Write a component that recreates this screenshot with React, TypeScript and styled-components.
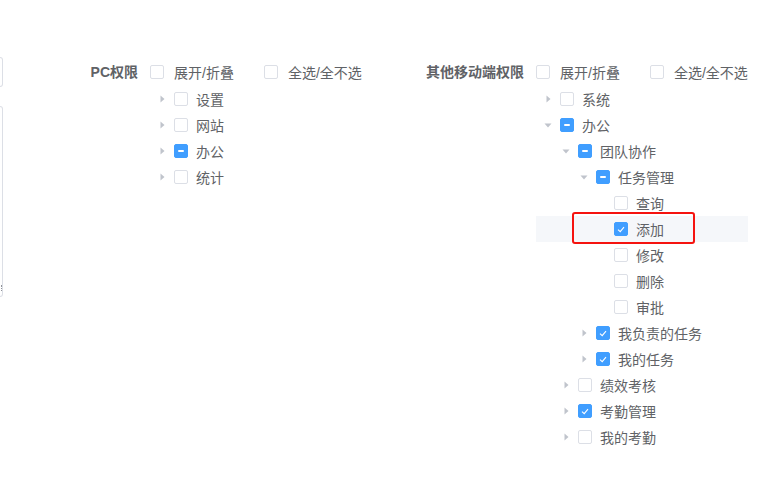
import * as React from "react";
import { styled, createGlobalStyle } from "styled-components";

const GlobalStyle = createGlobalStyle`
	body {
		margin: 0;
		background: #fff;
		font-family: "Liberation Sans", "Noto Sans CJK SC", sans-serif;
		color: #606266;
	}
`;

type CheckState = "none" | "checked" | "half";

type TreeNode = {
	label: string;
	check: CheckState;
	open?: boolean;
	leaf?: boolean;
	active?: boolean;
	children?: TreeNode[];
};

const pcTree: TreeNode[] = [
	{ label: "设置", check: "none" },
	{ label: "网站", check: "none" },
	{ label: "办公", check: "half" },
	{ label: "统计", check: "none" },
];

const mobileTree: TreeNode[] = [
	{ label: "系统", check: "none" },
	{
		label: "办公",
		check: "half",
		open: true,
		children: [
			{
				label: "团队协作",
				check: "half",
				open: true,
				children: [
					{
						label: "任务管理",
						check: "half",
						open: true,
						children: [
							{ label: "查询", check: "none", leaf: true },
							{ label: "添加", check: "checked", leaf: true, active: true },
							{ label: "修改", check: "none", leaf: true },
							{ label: "删除", check: "none", leaf: true },
							{ label: "审批", check: "none", leaf: true },
						],
					},
					{ label: "我负责的任务", check: "checked" },
					{ label: "我的任务", check: "checked" },
				],
			},
			{ label: "绩效考核", check: "none" },
			{ label: "考勤管理", check: "checked" },
			{ label: "我的考勤", check: "none" },
		],
	},
];

const Page = styled.div`
	display: flex;
	align-items: flex-start;
	padding-top: 59px;
`;

const Stub = styled.div`
	width: 3px;
	margin-top: -2px;
	display: flex;
	flex-direction: column;
	gap: 19px;
`;

const StubBox = styled.div<{ $h: number }>`
	height: ${(p) => p.$h}px;
	border: 1px solid #dcdfe6;
	border-left: none;
	border-radius: 0 4px 4px 0;
	box-sizing: border-box;
	position: relative;
`;

const Grip = styled.span`
	position: absolute;
	right: 0;
	bottom: 5px;
	width: 2px;
	height: 6px;
	border-right: 1px dotted #909399;
`;

const Section = styled.div<{ $labelWidth: number; $contentWidth: number }>`
	display: grid;
	grid-template-columns: ${(p) => p.$labelWidth}px ${(p) => p.$contentWidth}px;
`;

const SectionLabel = styled.div`
	height: 26px;
	line-height: 26px;
	text-align: right;
	padding-right: 12px;
	font-size: 14px;
	font-weight: 700;
	color: #606266;
`;

const HeaderRow = styled.div`
	height: 26px;
	margin-bottom: 1px;
	display: flex;
	align-items: center;
	gap: 30px;
`;

const CheckOption = styled.label`
	display: flex;
	align-items: center;
	gap: 10px;
	font-size: 14px;
	color: #606266;
	white-space: nowrap;
`;

const Box = styled.span<{ $state: CheckState }>`
	width: 14px;
	height: 14px;
	box-sizing: border-box;
	border-radius: 2px;
	flex-shrink: 0;
	display: flex;
	align-items: center;
	justify-content: center;
	border: 1px solid ${(p) => (p.$state === "none" ? "#dcdfe6" : "#409eff")};
	background: ${(p) => (p.$state === "none" ? "#fff" : "#409eff")};
`;

const HalfBar = styled.span`
	width: 6px;
	height: 2px;
	background: #fff;
	border-radius: 1px;
`;

const Row = styled.div<{ $level: number; $active?: boolean }>`
	position: relative;
	height: 26px;
	display: flex;
	align-items: center;
	padding-left: ${(p) => p.$level * 18}px;
	background: ${(p) => (p.$active ? "#f5f7fa" : "transparent")};
	font-size: 14px;
	color: #606266;
	white-space: nowrap;
`;

const Caret = styled.span`
	width: 24px;
	height: 24px;
	display: flex;
	align-items: center;
	justify-content: center;
	flex-shrink: 0;
`;

const RowLabel = styled.span`
	margin-left: 8px;
`;

const Marker = styled.span`
	position: absolute;
	left: 36px;
	top: -4px;
	width: 123px;
	height: 32px;
	box-sizing: border-box;
	border: 2px solid #f5130f;
	border-radius: 3px;
`;

function CheckBox({ state }: { state: CheckState }) {
	return (
		<Box $state={state}>
			{state === "checked" && (
				<svg width="8" height="7" viewBox="0 0 8 7">
					<path d="M1 3.6 L3.2 5.6 L7 1.2" fill="none" stroke="#fff" strokeWidth="1.1" />
				</svg>
			)}
			{state === "half" && <HalfBar />}
		</Box>
	);
}

function CaretIcon({ node }: { node: TreeNode }) {
	if (node.leaf) return <Caret />;
	return (
		<Caret>
			{node.open ? (
				<svg width="8" height="5" viewBox="0 0 8 5">
					<path d="M0.5 0.5 L7.5 0.5 L4 4.5 Z" fill="#c0c4cc" />
				</svg>
			) : (
				<svg width="5" height="8" viewBox="0 0 5 8">
					<path d="M0.5 0.5 L4.5 4 L0.5 7.5 Z" fill="#c0c4cc" />
				</svg>
			)}
		</Caret>
	);
}

function TreeRows({ nodes, level }: { nodes: TreeNode[]; level: number }) {
	return (
		<>
			{nodes.map((node, i) => (
				<React.Fragment key={level + "-" + i + node.label}>
					<Row $level={level} $active={node.active}>
						<CaretIcon node={node} />
						<CheckBox state={node.check} />
						<RowLabel>{node.label}</RowLabel>
						{node.active && <Marker />}
					</Row>
					{node.open && node.children && (
						<TreeRows nodes={node.children} level={level + 1} />
					)}
				</React.Fragment>
			))}
		</>
	);
}

function PermissionSection({
	title,
	tree,
	labelWidth,
	contentWidth,
}: {
	title: string;
	tree: TreeNode[];
	labelWidth: number;
	contentWidth: number;
}) {
	return (
		<Section $labelWidth={labelWidth} $contentWidth={contentWidth}>
			<SectionLabel>{title}</SectionLabel>
			<div>
				<HeaderRow>
					<CheckOption>
						<CheckBox state="none" />
						展开/折叠
					</CheckOption>
					<CheckOption>
						<CheckBox state="none" />
						全选/全不选
					</CheckOption>
				</HeaderRow>
				<TreeRows nodes={tree} level={0} />
			</div>
		</Section>
	);
}

const App = () => {
	return (
		<>
			<GlobalStyle />
			<Page>
				<Stub>
					<StubBox $h={30} />
					<StubBox $h={191}>
						<Grip />
					</StubBox>
				</Stub>
				<PermissionSection title="PC权限" tree={pcTree} labelWidth={147} contentWidth={226} />
				<PermissionSection title="其他移动端权限" tree={mobileTree} labelWidth={160} contentWidth={212} />
			</Page>
		</>
	);
};

export default App;
